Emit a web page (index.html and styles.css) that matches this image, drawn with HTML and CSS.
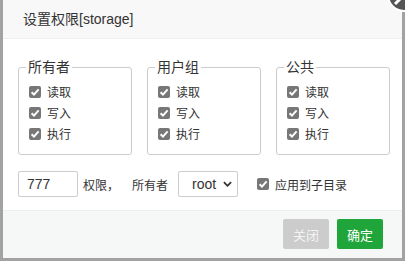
FILE: index.html
```html
<!DOCTYPE html>
<html lang="zh">
<head>
<meta charset="utf-8">
<link rel="stylesheet" href="styles.css">
</head>
<body>
<div class="page">
  <div class="dialog">
    <div class="header">设置权限[storage]</div>
    <div class="main">
      <div class="groups">
        <fieldset class="grp">
          <legend>所有者</legend>
          <div class="row"><span class="cb"><svg viewBox="0 0 12 12"><path d="M2.6 6.2 L5 8.6 L9.6 3.4"/></svg></span>读取</div>
          <div class="row"><span class="cb"><svg viewBox="0 0 12 12"><path d="M2.6 6.2 L5 8.6 L9.6 3.4"/></svg></span>写入</div>
          <div class="row"><span class="cb"><svg viewBox="0 0 12 12"><path d="M2.6 6.2 L5 8.6 L9.6 3.4"/></svg></span>执行</div>
        </fieldset>
        <fieldset class="grp">
          <legend>用户组</legend>
          <div class="row"><span class="cb"><svg viewBox="0 0 12 12"><path d="M2.6 6.2 L5 8.6 L9.6 3.4"/></svg></span>读取</div>
          <div class="row"><span class="cb"><svg viewBox="0 0 12 12"><path d="M2.6 6.2 L5 8.6 L9.6 3.4"/></svg></span>写入</div>
          <div class="row"><span class="cb"><svg viewBox="0 0 12 12"><path d="M2.6 6.2 L5 8.6 L9.6 3.4"/></svg></span>执行</div>
        </fieldset>
        <fieldset class="grp">
          <legend>公共</legend>
          <div class="row"><span class="cb"><svg viewBox="0 0 12 12"><path d="M2.6 6.2 L5 8.6 L9.6 3.4"/></svg></span>读取</div>
          <div class="row"><span class="cb"><svg viewBox="0 0 12 12"><path d="M2.6 6.2 L5 8.6 L9.6 3.4"/></svg></span>写入</div>
          <div class="row"><span class="cb"><svg viewBox="0 0 12 12"><path d="M2.6 6.2 L5 8.6 L9.6 3.4"/></svg></span>执行</div>
        </fieldset>
      </div>
      <div class="controls">
        <input class="num" type="text" value="777">
        <span class="txt perm">权限，</span>
        <span class="txt owner">所有者</span>
        <div class="selwrap">
          <select class="sel"><option>root</option></select>
          <svg class="chev" viewBox="0 0 10 6"><path d="M1 1 L5 5 L9 1"/></svg>
        </div>
        <div class="row sub"><span class="cb"><svg viewBox="0 0 12 12"><path d="M2.6 6.2 L5 8.6 L9.6 3.4"/></svg></span>应用到子目录</div>
      </div>
    </div>
    <div class="footer">
      <button class="btn btn-close">关闭</button>
      <button class="btn btn-ok">确定</button>
    </div>
    <span class="xbtn"><svg viewBox="0 0 30 30"><path d="M6 6 L24 24 M24 6 L6 24"/></svg></span>
  </div>
</div>
</body>
</html>
```

FILE: styles.css
```css
html, body {
  margin: 0;
  padding: 0;
}
body {
  background: #a2a2a2;
  font-family: "Liberation Sans", "Noto Sans CJK SC", sans-serif;
  color: #333;
  overflow: hidden;
}
.page {
  padding-left: 3px;
}
.dialog {
  position: relative;
  width: 399px;
  height: 258px;
  background: #fff;
  display: flex;
  flex-direction: column;
}
.header {
  height: 38px;
  line-height: 38px;
  border-bottom: 1px solid #eee;
  background: #f8f8f8;
  padding-left: 20px;
  font-size: 14px;
  color: #333;
}
.main {
  flex: 1;
  padding: 18px 12px 0 15px;
}
.groups {
  display: flex;
  gap: 15px;
}
.grp {
  width: 114px;
  box-sizing: border-box;
  margin: 0;
  min-width: 0;
  padding: 4px 0 10px 10px;
  border: 1px solid #ccc;
  border-radius: 3px;
}
.grp legend {
  font-size: 14px;
  line-height: 20px;
  padding: 0 2px;
  margin-left: -3px;
  color: #333;
}
.row {
  display: flex;
  align-items: center;
  gap: 6px;
  height: 21px;
  font-size: 12px;
  color: #333;
}
.cb {
  width: 12px;
  height: 12px;
  border-radius: 2px;
  background: #777;
  display: inline-flex;
  align-items: center;
  justify-content: center;
  flex: none;
}
.cb svg {
  width: 12px;
  height: 12px;
  fill: none;
  stroke: #fff;
  stroke-width: 2;
}
.controls {
  display: flex;
  align-items: center;
  height: 26px;
  margin-top: 16px;
}
.num {
  width: 60px;
  height: 26px;
  box-sizing: border-box;
  border: 1px solid #ccc;
  border-radius: 2px;
  padding: 0 8px;
  font-family: inherit;
  font-size: 14px;
  color: #333;
  outline: none;
}
.txt {
  font-size: 12px;
  color: #333;
}
.perm {
  margin-left: 5px;
}
.owner {
  margin-left: 13px;
}
.selwrap {
  position: relative;
  margin-left: 10px;
  width: 60px;
  height: 26px;
}
.sel {
  appearance: none;
  -webkit-appearance: none;
  width: 60px;
  height: 26px;
  box-sizing: border-box;
  border: 1px solid #ccc;
  border-radius: 2px;
  background: #fff;
  padding: 0 0 0 13px;
  font-family: inherit;
  font-size: 14px;
  color: #333;
  outline: none;
}
.chev {
  position: absolute;
  left: 45px;
  top: 10px;
  width: 9px;
  height: 6px;
  fill: none;
  stroke: #333;
  stroke-width: 2;
  pointer-events: none;
}
.sub {
  margin-left: 19px;
}
.footer {
  border-top: 1px solid #eee;
  background: #f6f8f8;
  padding: 8px 19px 9px;
  display: flex;
  justify-content: flex-end;
  gap: 8px;
}
.btn {
  height: 30px;
  padding: 0 10px;
  border: 0;
  border-radius: 2px;
  font-family: inherit;
  font-size: 13px;
  color: #fff;
}
.btn-close {
  background: #ccc;
  color: #f4f4f4;
}
.btn-ok {
  background: #20a53a;
}
.xbtn {
  position: absolute;
  left: 384px;
  top: -22px;
  width: 34px;
  height: 34px;
  box-sizing: border-box;
  border-radius: 50%;
  border: 2px solid #fff;
  background: #555;
}
.xbtn svg {
  display: block;
  width: 30px;
  height: 30px;
  fill: none;
  stroke: #fff;
  stroke-width: 3;
}
```
